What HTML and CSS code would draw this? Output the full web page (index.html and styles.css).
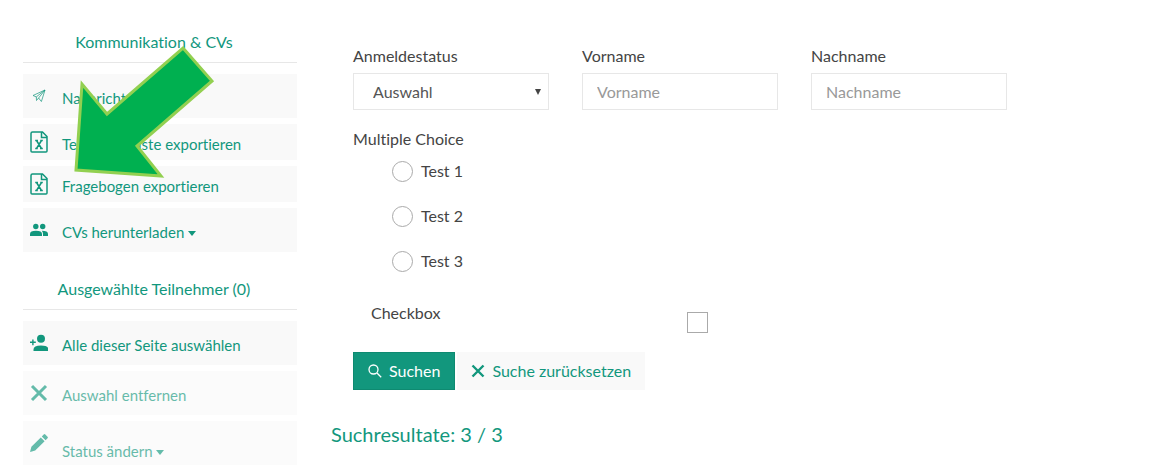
FILE: index.html
```html
<!DOCTYPE html>
<html lang="de">
<head>
    <meta charset="UTF-8">
    <meta name="viewport" content="width=device-width, initial-scale=1.0">
    <title>Teilnehmer</title>
    <link rel="stylesheet" href="styles.css">
</head>
<body>
    <div class="page">
        <aside class="sidebar">
            <h2>Kommunikation &amp; CVs</h2>
            <ul class="actions">
                <li>
                    <a href="#">
                        <svg class="icon thin" viewBox="0 0 18 18"><path d="M3 8.500 15 3l-3.600 11.500-2.800-3.500-2.100 2.500-.2-3.600zM6.300 9.900 15 3 8.600 11"/></svg>
                        <span>Nachricht senden</span>
                    </a>
                </li>
                <li>
                    <a href="#" class="compact">
                        <svg class="icon tall" viewBox="0 0 18 22"><path class="line" d="M2.500 1h10L17 5.500v14.500q0 1-1 1H2q-1 0-1-1V2.500Q1 1 2.500 1zM11.500 1v5.500H17"/><path class="line" d="M6.500 9.500l5 8M11.500 9.500l-5 8M5.200 9.500h2.800M10.200 9.500h2.600M5.200 17.500h2.600M10 17.500h2.800"/></svg>
                        <span>Teilnehmerliste exportieren</span>
                    </a>
                </li>
                <li>
                    <a href="#" class="compact">
                        <svg class="icon tall" viewBox="0 0 18 22"><path class="line" d="M2.500 1h10L17 5.500v14.500q0 1-1 1H2q-1 0-1-1V2.500Q1 1 2.500 1zM11.500 1v5.500H17"/><path class="line" d="M6.500 9.500l5 8M11.500 9.500l-5 8M5.200 9.500h2.800M10.200 9.500h2.600M5.200 17.500h2.600M10 17.500h2.800"/></svg>
                        <span>Fragebogen exportieren</span>
                    </a>
                </li>
                <li>
                    <a href="#">
                        <svg class="icon" viewBox="0 0 18 18"><circle cx="5.800" cy="5.500" r="2.700"/><circle cx="12.700" cy="5.500" r="2.700"/><path d="M0 15v-2q0-3.300 6-3.300t6 3.300v2zM13 15v-2q0-2-1.200-3.200Q18 9.800 18 13v2z"/></svg>
                        <span>CVs herunterladen <i class="caret"></i></span>
                    </a>
                </li>
            </ul>

            <h2>Ausgewählte Teilnehmer (0)</h2>
            <ul class="actions">
                <li>
                    <a href="#">
                        <svg class="icon" viewBox="0 0 18 18"><circle cx="11" cy="4.800" r="4"/><path d="M3.500 17v-1.600q0-3.900 7.500-3.900t7.500 3.900V17zM2.200 5.400h1.400v2.200h2.200V9H3.600v2.200H2.200V9H0V7.600h2.200z"/></svg>
                        <span>Alle dieser Seite auswählen</span>
                    </a>
                </li>
                <li>
                    <a href="#" class="disabled">
                        <svg class="icon" viewBox="0 0 18 18"><path class="cross" d="M2 2l14 14M16 2L2 16"/></svg>
                        <span>Auswahl entfernen</span>
                    </a>
                </li>
                <li>
                    <a href="#" class="disabled low">
                        <svg class="icon" viewBox="0 0 18 18"><path d="M0 18l1.400-5.200L10.800 3.400l3.800 3.800-9.400 9.400zM11.800 2.400l1.900-1.900q.8-.8 1.600 0l2.200 2.200q.8.800 0 1.600l-1.900 1.900z"/></svg>
                        <span>Status ändern <i class="caret"></i></span>
                    </a>
                </li>
            </ul>

            <svg class="arrow" viewBox="0 0 144 136"><path d="M111 4 140 37 65 102 89 132 4 126 10 40 35 70z"/></svg>
        </aside>

        <main>
            <form class="search">
                <div class="fields">
                    <div class="field">
                        <label for="status">Anmeldestatus</label>
                        <div class="select">
                            <select id="status">
                                <option>Auswahl</option>
                            </select>
                            <svg viewBox="0 0 6 6"><path d="M0 0h6L3 6z"/></svg>
                        </div>
                    </div>
                    <div class="field">
                        <label for="vorname">Vorname</label>
                        <input type="text" id="vorname" placeholder="Vorname">
                    </div>
                    <div class="field">
                        <label for="nachname">Nachname</label>
                        <input type="text" id="nachname" placeholder="Nachname">
                    </div>
                </div>

                <fieldset class="choices">
                    <legend>Multiple Choice</legend>
                    <label><input type="radio" name="choice">Test 1</label>
                    <label><input type="radio" name="choice">Test 2</label>
                    <label><input type="radio" name="choice">Test 3</label>
                </fieldset>

                <div class="check">
                    <label for="checkbox">Checkbox</label>
                    <input type="checkbox" id="checkbox">
                </div>

                <div class="buttons">
                    <button type="submit" class="primary">
                        <svg viewBox="0 0 14 14"><circle cx="5.500" cy="5.500" r="4.500"/><path d="M9 9l4.200 4.200"/></svg>
                        Suchen
                    </button>
                    <button type="reset">
                        <svg viewBox="0 0 14 14"><path class="cross" d="M1.500 1.500l11 11M12.500 1.500l-11 11"/></svg>
                        Suche zurücksetzen
                    </button>
                </div>
            </form>
            <h1>Suchresultate: 3 / 3</h1>
        </main>
    </div>
</body>
</html>
```
FILE: styles.css
```css
* {
    box-sizing: border-box;
}
body {
    margin: 0;
    background: #fff;
    color: #444;
    font-family: Lato, sans-serif;
    font-size: 16px;
    font-variant-ligatures: none;
    line-height: 24px;
}
.page {
    display: grid;
    grid-template-columns: minmax(220px, 274px) 1fr;
    gap: 34px;
    padding: 0 23px;
}

/* sidebar */
.sidebar {
    position: relative;
    padding-top: 30px;
}
.sidebar h2 {
    margin: 0 0 11px;
    padding: 0 12px 8px 0;
    border-bottom: 1px solid #e7e7e7;
    color: #12977d;
    font-size: 16px;
    font-weight: normal;
    text-align: center;
}
.actions {
    display: flex;
    flex-direction: column;
    gap: 6px;
    margin: 0 0 25px;
    padding: 0;
    list-style: none;
}
.actions a {
    display: flex;
    align-items: center;
    gap: 14px;
    height: 44px;
    padding: 0 7px;
    background: #f9f9f9;
    color: #12977d;
    font-size: 15px;
    text-decoration: none;
}
.actions a.compact {
    height: 36px;
}
.actions a.disabled {
    opacity: 0.65;
}
.actions span {
    padding-top: 4px;
}
.actions .low span {
    padding-top: 16px;
}
.icon {
    flex: none;
    width: 18px;
    height: 18px;
    fill: #12977d;
}
.icon.tall {
    height: 22px;
}
.icon.thin {
    fill: none;
    stroke: #12977d;
    stroke-width: 0.7;
}
.icon .line {
    fill: none;
    stroke: #12977d;
    stroke-width: 1.5;
}
.cross {
    fill: none;
    stroke: #12977d;
    stroke-width: 3;
}
button .cross {
    stroke-width: 2.4;
}
.caret {
    display: inline-block;
    border: 4px solid transparent;
    border-top: 5px solid;
    border-bottom: 0;
    vertical-align: 2px;
}
.arrow {
    position: absolute;
    top: 44px;
    left: 49px;
    width: 144px;
    height: 136px;
    fill: #00b050;
    stroke: #92d050;
    stroke-width: 3;
}

/* search form */
main {
    padding-top: 44px;
}
.search {
    padding: 0 22px;
}
.fields {
    display: grid;
    grid-template-columns: repeat(3, 1fr);
    gap: 33px;
    max-width: 654px;
}
.field label {
    display: block;
    margin-bottom: 5px;
}
.field input,
.field select {
    width: 100%;
    height: 37px;
    padding: 0 14px;
    border: 1px solid #e7e7e7;
    border-radius: 0;
    background: #fff;
    color: #555;
    font: inherit;
}
.field input::placeholder {
    color: #999;
}
.select {
    position: relative;
}
.field select {
    padding-left: 19px;
    appearance: none;
}
.select svg {
    position: absolute;
    top: 16px;
    right: 8px;
    width: 6px;
    height: 6px;
    fill: #444;
}
.choices {
    display: flex;
    flex-direction: column;
    gap: 21px;
    margin: 17px 0 0;
    padding: 0 0 0 39px;
    border: 0;
}
.choices legend {
    margin: 0 0 8px -39px;
    padding: 0;
}
.choices label {
    display: flex;
    align-items: center;
    gap: 8px;
}
input[type="radio"],
input[type="checkbox"] {
    width: 21px;
    height: 21px;
    margin: 0;
    border: 1px solid #aaa;
    background: #fff;
    appearance: none;
}
input[type="radio"] {
    border-radius: 50%;
}
input:checked {
    background: #12977d;
}
.check {
    display: grid;
    grid-template-columns: 316px auto;
    justify-content: start;
    margin-top: 28px;
    padding-left: 18px;
}
.check input {
    margin-top: 11px;
}
.buttons {
    display: flex;
    gap: 2px;
    margin-top: 19px;
}
button {
    display: flex;
    align-items: center;
    gap: 7px;
    height: 38px;
    padding: 0 14px;
    border: 0;
    background: #f9f9f9;
    color: #12977d;
    font: inherit;
    cursor: pointer;
}
button svg {
    width: 14px;
    height: 14px;
}
button.primary {
    border: 1px solid #0e8a71;
    background: #12977d;
    color: #fff;
}
button.primary svg {
    fill: none;
    stroke: #fff;
    stroke-width: 1.3;
}
h1 {
    margin: 30px 0 0;
    color: #12977d;
    font-size: 20px;
    font-weight: normal;
    line-height: 28px;
}
```
